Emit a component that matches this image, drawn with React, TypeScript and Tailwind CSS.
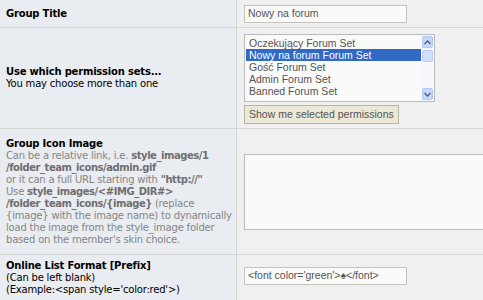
// Formularz edycji grupy – widok z panelu admina (stary styl IPB).

const label = "font-['DejaVu_Sans',sans-serif] text-[10px] leading-[12px] tracking-[-0.2px]";
const field = "font-['Liberation_Sans',Arial,sans-serif] text-[10.5px]";
const hint = "text-[#6f6f6f] tracking-[-0.45px]";

const sets = [
  "Oczekujący Forum Set",
  "Nowy na forum Forum Set",
  "Gość Forum Set",
  "Admin Forum Set",
  "Banned Forum Set",
];

function ScrollArrow({ up }: { up?: boolean }) {
  return (
    <div className="h-[12px] w-[11px] rounded-[2px] bg-[#c6d6fb] border border-[#b4c8f3] flex items-center justify-center">
      <svg width="7" height="5" viewBox="0 0 7 5">
        <path
          d={up ? "M0.5 4 L3.5 1 L6.5 4" : "M0.5 1 L3.5 4 L6.5 1"}
          fill="none"
          stroke="#4d6185"
          strokeWidth="1.4"
        />
      </svg>
    </div>
  );
}

export default function App() {
  return (
    <div className="w-[483px] h-[300px] overflow-hidden bg-[#f0f0f0] text-black">
      {/* Group Title */}
      <div className="flex h-[28px] border-b border-[#d6d6d6]">
        <div className={`w-[237px] shrink-0 bg-[#e9ecf0] border-r border-[#d6d6d6] flex items-center pl-[6px] font-bold ${label}`}>
          Group Title
        </div>
        <div className="flex-1 flex items-start pt-[5px] pl-[7px]">
          <div className={`w-[163px] h-[18px] border border-[#c4c4bf] bg-[#fafafa] pl-[3px] flex items-center text-[#555] ${field}`}>
            Nowy na forum
          </div>
        </div>
      </div>

      {/* Permission sets */}
      <div className="flex h-[101px] border-b border-[#d6d6d6]">
        <div className={`w-[237px] shrink-0 bg-[#e9ecf0] border-r border-[#d6d6d6] flex flex-col justify-center pl-[6px] ${label}`}>
          <div className="font-bold">Use which permission sets...</div>
          <div>You may choose more than one</div>
        </div>
        <div className="flex-1 flex flex-col items-start pt-[6px] pl-[7px] gap-[3px]">
          <div className="w-[191px] h-[68px] border border-[#b9bcbf] bg-[#fafafa] flex">
            <div className={`flex-1 pt-[2px] pl-[1px] text-[#555] ${field}`}>
              {sets.map((s, i) => (
                <div
                  key={s}
                  className={`h-[12px] leading-[12px] pl-[3px] whitespace-nowrap ${i === 1 ? "bg-[#316ac5] text-white" : ""}`}
                >
                  {s}
                </div>
              ))}
            </div>
            <div className="w-[13px] bg-[#f7f8fb] flex flex-col items-center py-[1px]">
              <ScrollArrow up />
              <div className="mt-[2px] h-[12px] w-[11px] rounded-[2px] bg-[#d3e0fd] border border-[#bccdf5]" />
              <div className="flex-1" />
              <ScrollArrow />
            </div>
          </div>
          <div className={`h-[19px] px-[4px] border border-[#b8b4a4] bg-[#ebe8d8] flex items-center text-[#555] ${field}`}>
            Show me selected permissions
          </div>
        </div>
      </div>

      {/* Group Icon Image */}
      <div className="flex h-[126px] border-b border-[#d6d6d6]">
        <div className={`w-[237px] shrink-0 bg-[#e9ecf0] border-r border-[#d6d6d6] flex flex-col justify-center pl-[6px] whitespace-nowrap text-[#858585] ${label}`}>
          <div className="font-bold text-black">Group Icon Image</div>
          <div>Can be a relative link, i.e. <b className={hint}>style_images/1</b></div>
          <div><b className={hint}>/folder_team_icons/admin.gif</b></div>
          <div>or it can a full URL starting with <b className={hint}>"http://"</b></div>
          <div>Use <b className={hint}>style_images/&lt;#IMG_DIR#&gt;</b></div>
          <div><b className={hint}>/folder_team_icons/{"{image}"}</b> (replace</div>
          <div>{"{image}"} with the image name) to dynamically</div>
          <div>load the image from the style_image folder</div>
          <div>based on the member's skin choice.</div>
        </div>
        <div className="flex-1 flex items-center pl-[7px]">
          <div className="w-[300px] h-[76px] shrink-0 border border-[#bdbdb8] bg-[#fafafa]" />
        </div>
      </div>

      {/* Online List Format */}
      <div className="flex h-[46px] border-b border-[#d6d6d6]">
        <div className={`w-[237px] shrink-0 bg-[#e9ecf0] border-r border-[#d6d6d6] flex flex-col justify-center pl-[6px] whitespace-nowrap ${label}`}>
          <div className="font-bold">Online List Format [Prefix]</div>
          <div>(Can be left blank)</div>
          <div>(Example:&lt;span style='color:red'&gt;)</div>
        </div>
        <div className="flex-1 flex items-start pt-[12px] pl-[7px]">
          <div className={`w-[163px] h-[18px] border border-[#c4c4bf] bg-[#fafafa] pl-[3px] flex items-center text-[#555] ${field}`}>
            &lt;font color='green'&gt;♠&lt;/font&gt;
          </div>
        </div>
      </div>
    </div>
  );
}
